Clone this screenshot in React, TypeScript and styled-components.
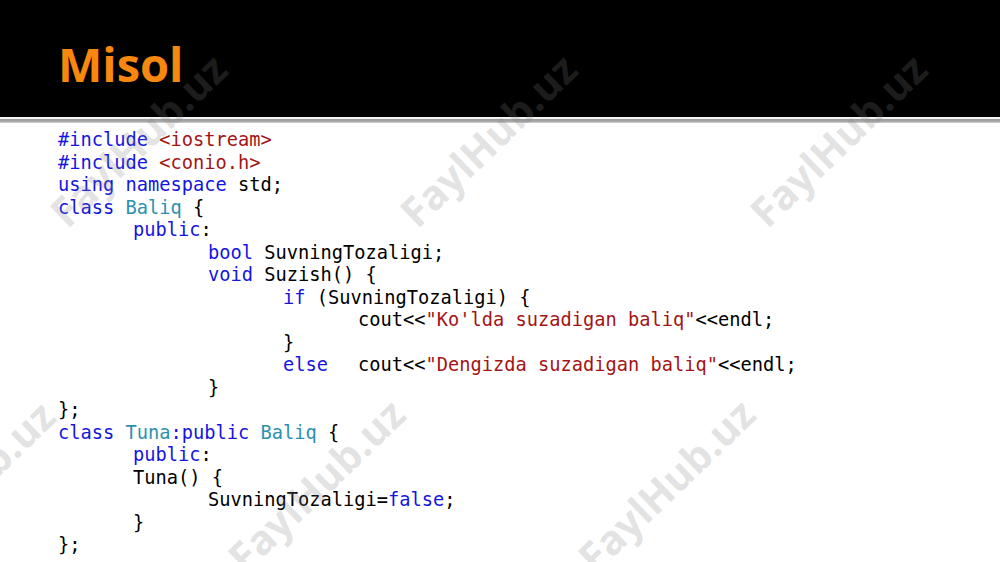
import React from "react";
import styled, { createGlobalStyle } from "styled-components";

const GlobalStyle = createGlobalStyle`
  html, body { margin: 0; padding: 0; background: #ffffff; }
  body { width: 1000px; height: 562px; overflow: hidden; }
`;

const Slide = styled.div`
  position: relative;
  width: 1000px;
  height: 562px;
  overflow: hidden;
  background: #ffffff;
  display: flex;
  flex-direction: column;
`;

const Header = styled.header`
  height: 117px;
  box-sizing: border-box;
  background: #000000;
  padding: 41px 0 0 58px;
`;

const Title = styled.h1`
  margin: 0;
  font-family: "Open Sans", "Liberation Sans", sans-serif;
  font-weight: 700;
  font-size: 47px;
  line-height: 47px;
  color: #f7870f;
`;

const Rule = styled.div`
  height: 2px;
  background: #f4f4f4;
`;

const RuleShade = styled.div`
  height: 4px;
  background: linear-gradient(#9a9a9a, #a8a8a8 60%, #d8d8d8);
`;

const Code = styled.div`
  padding: 6px 0 0 58px;
  font-family: "DejaVu Sans Mono", "Liberation Mono", monospace;
  font-size: 18.7px;
  line-height: 22.5px;
  color: #000000;
  white-space: pre;
  tab-size: 75px;
`;

const Line = styled.div<{ $indent: number }>`
  padding-left: ${(p) => p.$indent * 75}px;
  height: 22.5px;
`;

type Kind = "kw" | "str" | "type" | "plain";
const colors: Record<Kind, string> = {
  kw: "#1515e0",
  str: "#a31515",
  type: "#2b91af",
  plain: "#000000",
};

const Tok = styled.span<{ $kind: Kind }>`
  color: ${(p) => colors[p.$kind]};
`;

const Watermark = styled.div`
  position: absolute;
  font-family: "Open Sans", "Liberation Sans", sans-serif;
  font-weight: 700;
  font-size: 41px;
  line-height: 1;
  color: rgba(128, 128, 128, 0.23);
  white-space: nowrap;
  transform: translate(-50%, -50%) rotate(-44deg);
  pointer-events: none;
`;

type Seg = [Kind, string];
const lines: { indent: number; segs: Seg[] }[] = [
  { indent: 0, segs: [["kw", "#include "], ["str", "<iostream>"]] },
  { indent: 0, segs: [["kw", "#include "], ["str", "<conio.h>"]] },
  { indent: 0, segs: [["kw", "using namespace "], ["plain", "std;"]] },
  { indent: 0, segs: [["kw", "class "], ["type", "Baliq"], ["plain", " {"]] },
  { indent: 1, segs: [["kw", "public"], ["plain", ":"]] },
  { indent: 2, segs: [["kw", "bool "], ["plain", "SuvningTozaligi;"]] },
  { indent: 2, segs: [["kw", "void "], ["plain", "Suzish() {"]] },
  { indent: 3, segs: [["kw", "if "], ["plain", "(SuvningTozaligi) {"]] },
  { indent: 4, segs: [["plain", "cout<<"], ["str", "\"Ko'lda suzadigan baliq\""], ["plain", "<<endl;"]] },
  { indent: 3, segs: [["plain", "}"]] },
  { indent: 3, segs: [["kw", "else"], ["plain", "\tcout<<"], ["str", "\"Dengizda suzadigan baliq\""], ["plain", "<<endl;"]] },
  { indent: 2, segs: [["plain", "}"]] },
  { indent: 0, segs: [["plain", "};"]] },
  { indent: 0, segs: [["kw", "class "], ["type", "Tuna"], ["kw", ":public "], ["type", "Baliq"], ["plain", " {"]] },
  { indent: 1, segs: [["kw", "public"], ["plain", ":"]] },
  { indent: 1, segs: [["plain", "Tuna() {"]] },
  { indent: 2, segs: [["plain", "SuvningTozaligi="], ["kw", "false"], ["plain", ";"]] },
  { indent: 1, segs: [["plain", "}"]] },
  { indent: 0, segs: [["plain", "};"]] },
];

const marks: [number, number][] = [
  [138, 140],
  [488, 140],
  [838, 140],
  [-34, 487],
  [316, 485],
  [666, 485],
];

export default function App() {
  return (
    <>
      <GlobalStyle />
      <Slide>
        <Header>
          <Title>Misol</Title>
        </Header>
        <Rule />
        <RuleShade />
        <Code>
          {lines.map((l, i) => (
            <Line key={i} $indent={l.indent}>
              {l.segs.map(([k, t], j) => (
                <Tok key={j} $kind={k}>
                  {t}
                </Tok>
              ))}
            </Line>
          ))}
        </Code>
        {marks.map(([x, y], i) => (
          <Watermark key={i} style={{ left: x, top: y }}>
            FaylHub.uz
          </Watermark>
        ))}
      </Slide>
    </>
  );
}
